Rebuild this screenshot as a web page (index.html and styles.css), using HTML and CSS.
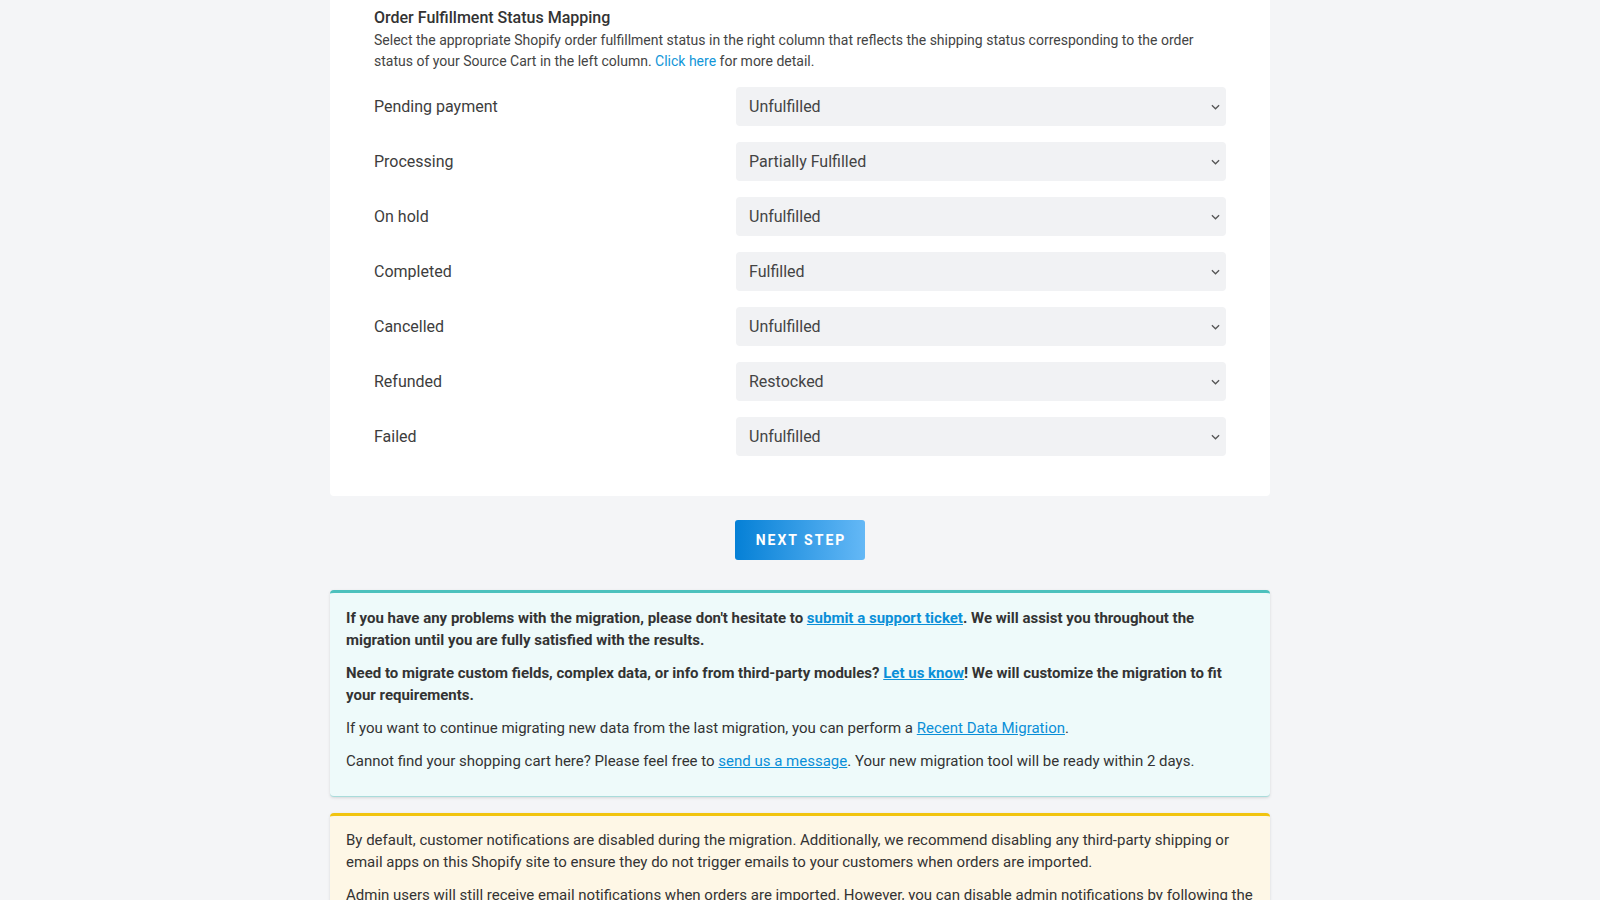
FILE: index.html
```html
<!DOCTYPE html>
<html lang="en">
<head>
<meta charset="utf-8">
<title>Order Fulfillment Status Mapping</title>
<link rel="stylesheet" href="styles.css">
</head>
<body>
<main class="page">
  <section class="card">
    <h2 class="card-title">Order Fulfillment Status Mapping</h2>
    <p class="card-desc">Select the appropriate Shopify order fulfillment status in the right column that reflects the shipping status corresponding to the order status of your Source Cart in the left column. <a class="plain-link" href="#">Click here</a> for more detail.</p>
    <div class="mapping">
      <div class="map-row">
        <span class="map-label">Pending payment</span>
        <div class="select"><span>Unfulfilled</span><svg class="chev" viewBox="0 0 10 6" width="9" height="6"><path d="M1 1l4 4 4-4" fill="none" stroke="#555" stroke-width="1.4"/></svg></div>
      </div>
      <div class="map-row">
        <span class="map-label">Processing</span>
        <div class="select"><span>Partially Fulfilled</span><svg class="chev" viewBox="0 0 10 6" width="9" height="6"><path d="M1 1l4 4 4-4" fill="none" stroke="#555" stroke-width="1.4"/></svg></div>
      </div>
      <div class="map-row">
        <span class="map-label">On hold</span>
        <div class="select"><span>Unfulfilled</span><svg class="chev" viewBox="0 0 10 6" width="9" height="6"><path d="M1 1l4 4 4-4" fill="none" stroke="#555" stroke-width="1.4"/></svg></div>
      </div>
      <div class="map-row">
        <span class="map-label">Completed</span>
        <div class="select"><span>Fulfilled</span><svg class="chev" viewBox="0 0 10 6" width="9" height="6"><path d="M1 1l4 4 4-4" fill="none" stroke="#555" stroke-width="1.4"/></svg></div>
      </div>
      <div class="map-row">
        <span class="map-label">Cancelled</span>
        <div class="select"><span>Unfulfilled</span><svg class="chev" viewBox="0 0 10 6" width="9" height="6"><path d="M1 1l4 4 4-4" fill="none" stroke="#555" stroke-width="1.4"/></svg></div>
      </div>
      <div class="map-row">
        <span class="map-label">Refunded</span>
        <div class="select"><span>Restocked</span><svg class="chev" viewBox="0 0 10 6" width="9" height="6"><path d="M1 1l4 4 4-4" fill="none" stroke="#555" stroke-width="1.4"/></svg></div>
      </div>
      <div class="map-row">
        <span class="map-label">Failed</span>
        <div class="select"><span>Unfulfilled</span><svg class="chev" viewBox="0 0 10 6" width="9" height="6"><path d="M1 1l4 4 4-4" fill="none" stroke="#555" stroke-width="1.4"/></svg></div>
      </div>
    </div>
  </section>

  <div class="actions">
    <button class="btn-next" type="button">NEXT STEP</button>
  </div>

  <section class="notice notice-info">
    <p class="strong">If you have any problems with the migration, please don't hesitate to <a href="#">submit a support ticket</a>. We will assist you throughout the migration until you are fully satisfied with the results.</p>
    <p class="strong">Need to migrate custom fields, complex data, or info from third-party modules? <a href="#">Let us know</a>! We will customize the migration to fit your requirements.</p>
    <p>If you want to continue migrating new data from the last migration, you can perform a <a href="#">Recent Data Migration</a>.</p>
    <p>Cannot find your shopping cart here? Please feel free to <a href="#">send us a message</a>. Your new migration tool will be ready within 2 days.</p>
  </section>

  <section class="notice notice-warn">
    <p>By default, customer notifications are disabled during the migration. Additionally, we recommend disabling any third-party shipping or email apps on this Shopify site to ensure they do not trigger emails to your customers when orders are imported.</p>
    <p>Admin users will still receive email notifications when orders are imported. However, you can disable admin notifications by following the instructions in our guide before starting the migration.</p>
  </section>
</main>
</body>
</html>
```

FILE: styles.css
```css
* { box-sizing: border-box; }

html, body {
  margin: 0;
  background: #f4f5f7;
  font-family: Roboto, "Liberation Sans", Arial, sans-serif;
  color: #333;
}

.page {
  width: 940px;
  margin: 0 auto;
}

/* mapping card */
.card {
  background: #fff;
  border-radius: 0 0 4px 4px;
  padding: 8px 44px 40px;
}

.card-title {
  margin: 0;
  font-size: 16px;
  line-height: 20px;
  font-weight: 500;
  color: #333;
}

.card-desc {
  margin: 2px 0 0;
  font-size: 14px;
  line-height: 21px;
  color: #444;
}

.plain-link {
  color: #1196d8;
  text-decoration: none;
}

.mapping {
  margin-top: 15px;
  display: flex;
  flex-direction: column;
  gap: 16px;
}

.map-row {
  display: grid;
  grid-template-columns: 362px 1fr;
  align-items: center;
}

.map-label {
  font-size: 16px;
  color: #3d3d3d;
}

.select {
  height: 39px;
  background: #f1f2f4;
  border-radius: 4px;
  padding: 0 6px 0 13px;
  display: flex;
  align-items: center;
  justify-content: space-between;
  font-size: 16px;
  color: #444;
}

.chev { display: block; }

/* primary action */
.actions {
  display: flex;
  justify-content: center;
  padding: 24px 0 30px;
}

.btn-next {
  width: 130px;
  height: 40px;
  border: 0;
  border-radius: 3px;
  background: linear-gradient(90deg, #0580d6 0%, #64b8f6 100%);
  color: #fff;
  font-family: inherit;
  font-size: 14px;
  font-weight: 700;
  letter-spacing: 2px;
  padding: 0 0 0 2px;
}

/* notices */
.notice {
  border-radius: 4px;
  padding: 14px 16px 14px;
  font-size: 15px;
  line-height: 22px;
  color: #333;
  box-shadow: 0 1px 3px rgba(0, 0, 0, 0.12);
}

.notice p { margin: 0 0 11px; }

.notice a {
  color: #0a8fd8;
  text-decoration: underline;
}

.notice .strong { font-weight: 700; }
.notice .strong a { font-weight: 700; }

.notice-info {
  background: #eefafa;
  border-top: 3px solid #4cc1bd;
  border-bottom: 1px solid #a9dcdb;
  padding-bottom: 13px;
}

.notice-warn {
  margin-top: 16px;
  background: #fef7e6;
  border-top: 3px solid #f1c40f;
  padding-top: 13px;
}
```
